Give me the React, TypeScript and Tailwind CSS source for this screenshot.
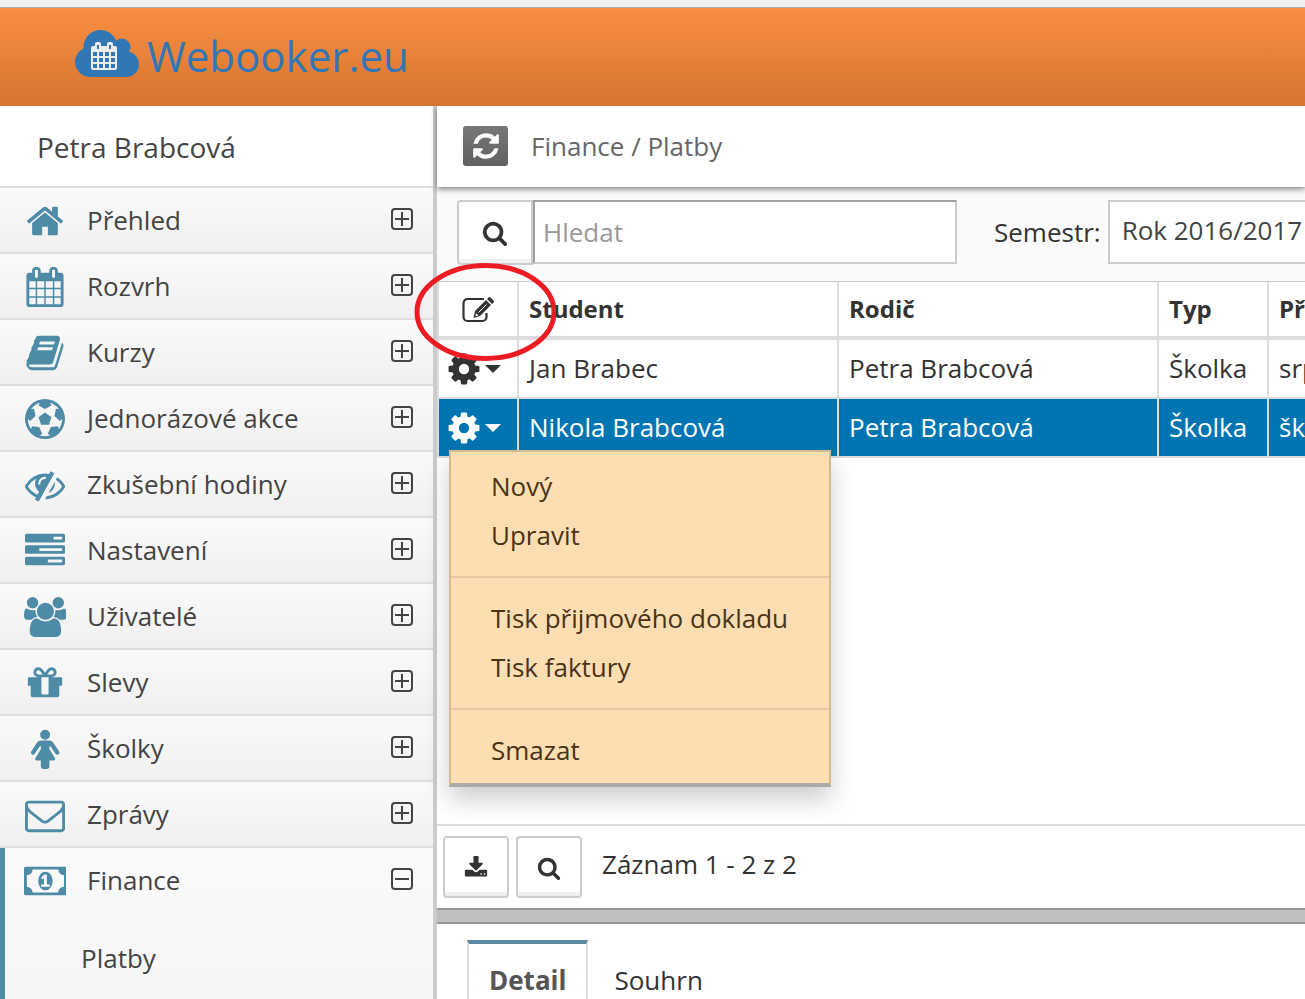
import React, { useState } from 'react';

interface IconProps {
  d: string;
  className?: string;
  width?: number;
}

const Icon: React.FC<IconProps> = ({ d, className, width = 1792 }) => (
  <svg viewBox={`0 0 ${width} 1792`} className={className} fill="currentColor" aria-hidden="true">
    <path d={d} />
  </svg>
);

const HOME = 'M1472 992v480q0 26-19 45t-45 19h-384v-384h-256v384h-384q-26 0-45-19t-19-45v-480q0-1 .5-3t.5-3l575-474 575 474q1 2 1 6zm223-69l-62 74q-8 9-21 11h-3q-13 0-21-7l-692-577-692 577q-12 8-24 7-13-2-21-11l-62-74q-8-10-7-23.5t11-21.5l719-599q32-26 76-26t76 26l244 204v-195q0-14 9-23t23-9h192q14 0 23 9t9 23v408l219 182q10 8 11 21.5t-7 23.5z';
const CALENDAR = 'M192 1664h288v-288h-288v288zm352 0h320v-288h-320v288zm-352-352h288v-320h-288v320zm352 0h320v-320h-320v320zm-352-384h288v-288h-288v288zm736 736h320v-288h-320v288zm-384-736h320v-288h-320v288zm768 736h288v-288h-288v288zm-384-352h320v-320h-320v320zm-352-864v-288q0-13-9.5-22.5t-22.5-9.5h-64q-13 0-22.5 9.5t-9.5 22.5v288q0 13 9.5 22.5t22.5 9.5h64q13 0 22.5-9.5t9.5-22.5zm736 864h288v-320h-288v320zm-384-384h320v-288h-320v288zm384 0h288v-288h-288v288zm32-480v-288q0-13-9.5-22.5t-22.5-9.5h-64q-13 0-22.5 9.5t-9.5 22.5v288q0 13 9.5 22.5t22.5 9.5h64q13 0 22.5-9.5t9.5-22.5zm384-64v1280q0 52-38 90t-90 38h-1408q-52 0-90-38t-38-90v-1280q0-52 38-90t90-38h128v-96q0-66 47-113t113-47h64q66 0 113 47t47 113v96h384v-96q0-66 47-113t113-47h64q66 0 113 47t47 113v96h128q52 0 90 38t38 90z';
const BOOK = 'M1703 478q40 57 18 129l-275 906q-19 64-76.5 107.5t-122.5 43.5h-923q-77 0-148.5-53.5t-99.5-131.5q-24-67-2-127 0-4 3-27t4-37q1-8-3-21.5t-3-19.5q2-11 8-21t16.5-23.5 16.5-23.5q23-38 45-91.5t30-91.5q3-10 .5-30t-.5-28q3-11 17-28t17-23q21-36 42-92t25-90q1-9-2.5-32t.5-28q4-13 22-30.5t22-22.5q19-26 42.5-84.5t27.5-96.5q1-8-3-25.5t-2-26.5q2-8 9-18t18-23 17-21q8-12 16.5-30.5t15-35 16-36 19.5-32 26.5-23.5 36-11.5 47.5 5.5l-1 3q38-9 51-9h761q74 0 114 56t18 130l-274 906q-36 119-71.5 153.5t-128.5 34.5h-869q-27 0-38 15-11 16-1 43 24 70 144 70h923q29 0 56-15.5t35-41.5l300-987q7-22 5-57 38 15 59 43zm-1064 2q-4 13 2 22.5t20 9.5h608q13 0 25.5-9.5t16.5-22.5l21-64q4-13-2-22.5t-20-9.5h-608q-13 0-25.5 9.5t-16.5 22.5zm-83 256q-4 13 2 22.5t20 9.5h608q13 0 25.5-9.5t16.5-22.5l21-64q4-13-2-22.5t-20-9.5h-608q-13 0-25.5 9.5t-16.5 22.5z';
const BALL = 'M609 816l287-208 287 208-109 336h-355zm287-816q182 0 348 71t286 191 191 286 71 348-71 348-191 286-286 191-348 71-348-71-286-191-191-286-71-348 71-348 191-286 286-191 348-71zm619 1350q149-203 149-454v-3l-102 89-240-224 63-323 134 12q-150-206-389-282l53 124-287 159-287-159 53-124q-239 76-389 282l135-12 62 323-240 224-102-89v3q0 251 149 454l30-132 326 40 139 298-116 69q117 39 240 39t240-39l-116-69 139-298 326-40z';
const EYE_OFF = 'M555 1335l78-141q-87-63-136-159t-49-203q0-121 61-225-229 117-381 353 167 258 427 375zm389-759q0-20-14-34t-34-14q-125 0-214.5 89.5t-89.5 214.5q0 20 14 34t34 14 34-14 14-34q0-86 61-147t147-61q20 0 34-14t14-34zm363-191q0 7-1 9-106 189-316 567t-315 566l-49 89q-10 16-28 16-12 0-134-70-16-10-16-28 0-12 44-87-143-65-263.5-173t-208.5-245q-20-31-20-69t20-69q153-235 380-371t496-136q89 0 180 17l54-97q10-16 28-16 5 0 18 6t31 15.5 33 18.5 31.5 18.5 19.5 11.5q16 10 16 27zm37 447q0 139-79 253.5t-209 164.5l280-502q8 45 8 84zm448 128q0 35-20 69-39 64-109 145-150 172-347.5 267t-419.5 95l74-132q212-18 392.5-137t301.5-307q-115-179-282-294l63-112q95 64 182.5 153t144.5 184q20 34 20 69z';
const TASKS = 'M1024 1408h640v-128h-640v128zm-384-512h1024v-128h-1024v128zm640-512h384v-128h-384v128zm512 832v256q0 26-19 45t-45 19h-1664q-26 0-45-19t-19-45v-256q0-26 19-45t45-19h1664q26 0 45 19t19 45zm0-512v256q0 26-19 45t-45 19h-1664q-26 0-45-19t-19-45v-256q0-26 19-45t45-19h1664q26 0 45 19t19 45zm0-512v256q0 26-19 45t-45 19h-1664q-26 0-45-19t-19-45v-256q0-26 19-45t45-19h1664q26 0 45 19t19 45z';
const USERS = 'M593 896q-162 5-265 128h-134q-82 0-138-40.5t-56-118.5q0-353 124-353 6 0 43.5 21t97.5 42.5 119 21.5q67 0 133-23-5 37-5 66 0 139 81 256zm1071 637q0 120-73 189.5t-194 69.5h-874q-121 0-194-69.5t-73-189.5q0-53 3.5-103.5t14-109 26.5-108.5 43-97.5 62-81 85.5-53.5 111.5-20q10 0 43 21.5t73 48 107 48 135 21.5 135-21.5 107-48 73-48 43-21.5q61 0 111.5 20t85.5 53.5 62 81 43 97.5 26.5 108.5 14 109 3.5 103.5zm-1024-1277q0 106-75 181t-181 75-181-75-75-181 75-181 181-75 181 75 75 181zm704 384q0 159-112.5 271.5t-271.5 112.5-271.5-112.5-112.5-271.5 112.5-271.5 271.5-112.5 271.5 112.5 112.5 271.5zm576 225q0 78-56 118.5t-138 40.5h-134q-103-123-265-128 81-117 81-256 0-29-5-66 66 23 133 23 59 0 119-21.5t97.5-42.5 43.5-21q124 0 124 353zm-128-609q0 106-75 181t-181 75-181-75-75-181 75-181 181-75 181 75 75 181z';
const GIFT = 'M1056 1356v-716h-320v716q0 25 18 38.5t46 13.5h192q28 0 46-13.5t18-38.5zm-456-844h195l-126-161q-26-31-69-31-40 0-68 28t-28 68 28 68 68 28zm688-96q0-40-28-68t-68-28q-43 0-69 31l-125 161h194q40 0 68-28t28-68zm376 256v320q0 14-9 23t-23 9h-96v416q0 40-28 68t-68 28h-1088q-40 0-68-28t-28-68v-416h-96q-14 0-23-9t-9-23v-320q0-14 9-23t23-9h440q-93 0-158.5-65.5t-65.5-158.5 65.5-158.5 158.5-65.5q107 0 168 77l128 165 128-165q61-77 168-77 93 0 158.5 65.5t65.5 158.5-65.5 158.5-158.5 65.5h440q14 0 23 9t9 23z';
const FEMALE = 'M1408 1056q0 40-28 68t-68 28q-51 0-80-43l-227-341h-45v132l247 411q9 15 9 33 0 26-19 45t-45 19h-192v272q0 46-33 79t-79 33h-160q-46 0-79-33t-33-79v-272h-192q-26 0-45-19t-19-45q0-18 9-33l247-411v-132h-45l-227 341q-29 43-80 43-40 0-68-28t-28-68q0-29 16-53l256-384q73-107 176-107h384q103 0 176 107l256 384q16 24 16 53zm-416-800q0 93-65.500 158.500t-158.500 65.500-158.500-65.500-65.500-158.500 65.500-158.500 158.500-65.500 158.500 65.500 65.500 158.500z';
const MAIL = 'M1664 1504v-768q-32 36-69 66-268 206-426 338-51 43-83 67t-86.5 48.5-102.5 24.5h-2q-48 0-102.5-24.5t-86.5-48.5-83-67q-158-132-426-338-37-30-69-66v768q0 13 9.5 22.5t22.5 9.5h1472q13 0 22.5-9.5t9.5-22.5zm0-1051v-24.5l-.5-13-3-12.5-5.5-9-9-7.5-14-2.5h-1472q-13 0-22.5 9.5t-9.5 22.5q0 168 147 284 193 152 401 317 6 5 35 29.5t46 37.5 44.5 31.5 50.5 27.5 43 9h2q20 0 43-9t50.5-27.5 44.5-31.5 46-37.5 35-29.5q208-165 401-317 54-43 100.5-115.5t46.5-131.5zm128-37v1088q0 66-47 113t-113 47h-1472q-66 0-113-47t-47-113v-1088q0-66 47-113t113-47h1472q66 0 113 47t47 113z';
const MONEY = 'M768 1152h384v-96h-128v-448h-114l-148 137 77 80q42-37 55-57h2v288h-128v96zm512-256q0 70-21 142t-59.5 134-101.5 101-138 39-138-39-101.5-101-59.5-134-21-142 21-142 59.5-134 101.5-101 138-39 138 39 101.5 101 59.5 134 21 142zm512 256v-512q-106 0-181-75t-75-181h-1152q0 106-75 181t-181 75v512q106 0 181 75t75 181h1152q0-106 75-181t181-75zm128-832v1152q0 26-19 45t-45 19h-1792q-26 0-45-19t-19-45v-1152q0-26 19-45t45-19h1792q26 0 45 19t19 45z';
const SEARCH = 'M1216 832q0-185-131.5-316.5t-316.5-131.5-316.5 131.5-131.5 316.5 131.5 316.5 316.5 131.5 316.5-131.5 131.5-316.5zm512 832q0 52-38 90t-90 38q-54 0-90-38l-343-342q-179 124-399 124-143 0-273.5-55.5t-225-150-150-225-55.5-273.5 55.5-273.5 150-225 225-150 273.5-55.5 273.5 55.5 225 150 150 225 55.5 273.5q0 220-124 399l343 343q37 37 37 90z';
const REFRESH = 'M1639 1056q0 5-1 7-64 268-268 434.5t-478 166.5q-146 0-282.5-55t-243.5-157l-129 129q-19 19-45 19t-45-19-19-45v-448q0-26 19-45t45-19h448q26 0 45 19t19 45-19 45l-137 137q71 66 161 102t187 36q134 0 250-65t186-179q11-17 53-117 8-23 30-23h192q13 0 22.5 9.5t9.5 22.5zm25-800v448q0 26-19 45t-45 19h-448q-26 0-45-19t-19-45 19-45l138-138q-148-137-349-137-134 0-250 65t-186 179q-11 17-53 117-8 23-30 23h-199q-13 0-22.5-9.5t-9.5-22.5v-7q65-268 270-434.5t480-166.5q146 0 284 55.5t245 156.5l130-129q19-19 45-19t45 19 19 45z';
const COG = 'M1152 896q0-106-75-181t-181-75-181 75-75 181 75 181 181 75 181-75 75-181zm512-109v222q0 12-8 23t-20 13l-185 28q-19 54-39 91 35 50 107 138 10 12 10 25t-9 23q-27 37-99 108t-94 71q-12 0-26-9l-138-108q-44 23-91 38-16 136-29 186-7 28-36 28h-222q-14 0-24.5-8.5t-11.5-21.5l-28-184q-49-16-90-37l-141 107q-10 9-25 9-14 0-25-11-126-114-165-168-7-10-7-23 0-12 8-23 15-21 51-66.5t54-70.5q-27-50-41-99l-183-27q-13-2-21-12.5t-8-23.5v-222q0-12 8-23t19-13l186-28q14-46 39-92-40-57-107-138-10-12-10-24 0-10 9-23 26-36 98.5-107.5t94.5-71.5q13 0 26 10l138 107q44-23 91-38 16-136 29-186 7-28 36-28h222q14 0 24.5 8.5t11.5 21.5l28 184q49 16 90 37l142-107q9-9 24-9 13 0 25 10 129 119 165 170 7 8 7 22 0 12-8 23-15 21-51 66.5t-54 70.5q26 50 41 98l183 28q13 2 21 12.5t8 23.5z';
const DOWNLOAD = 'M1344 1344q0-26-19-45t-45-19-45 19-19 45 19 45 45 19 45-19 19-45zm256 0q0-26-19-45t-45-19-45 19-19 45 19 45 45 19 45-19 19-45zm128-224v320q0 40-28 68t-68 28h-1472q-40 0-68-28t-28-68v-320q0-40 28-68t68-28h465l135 136q58 56 136 56t136-56l136-136h464q40 0 68 28t28 68zm-325-569q17 41-14 70l-448 448q-18 19-45 19t-45-19l-448-448q-31-29-14-70 17-39 59-39h256v-448q0-26 19-45t45-19h256q26 0 45 19t19 45v448h256q42 0 59 39z';
const CLOUD = 'M1984 1152q0 159-112.5 271.5t-271.5 112.5h-1088q-185 0-316.5-131.5t-131.5-316.5q0-132 71-241.5t187-163.5q-2-28-2-43 0-212 150-362t362-150q158 0 286.5 88t187.5 230q70-62 166-62 106 0 181 75t75 181q0 75-41 138 129 30 213 134.5t84 239.5z';

const MENU = [
  { label: 'Přehled', icon: HOME },
  { label: 'Rozvrh', icon: CALENDAR },
  { label: 'Kurzy', icon: BOOK },
  { label: 'Jednorázové akce', icon: BALL },
  { label: 'Zkušební hodiny', icon: EYE_OFF },
  { label: 'Nastavení', icon: TASKS },
  { label: 'Uživatelé', icon: USERS, width: 1920 },
  { label: 'Slevy', icon: GIFT },
  { label: 'Školky', icon: FEMALE, width: 1536 },
  { label: 'Zprávy', icon: MAIL },
];

const ROWS = [
  { student: 'Jan Brabec', parent: 'Petra Brabcová', type: 'Školka', note: 'srpen 2016' },
  { student: 'Nikola Brabcová', parent: 'Petra Brabcová', type: 'Školka', note: 'školné' },
];

const ACTIONS = [['Nový', 'Upravit'], ['Tisk přijmového dokladu', 'Tisk faktury'], ['Smazat']];

const Expander = ({ open = false }: { open?: boolean }) => (
  <svg viewBox="0 0 22 22" className="mr-5 mb-0.5 size-[22px] shrink-0" fill="none" stroke="#444" strokeWidth="2" aria-hidden="true">
    <rect x="1" y="1" width="20" height="20" rx="3" />
    <path d={open ? 'M4 11h14' : 'M4 11h14M11 4v14'} />
  </svg>
);

const EditIcon = () => (
  <svg viewBox="0 0 32 26" className="mt-0.5 h-[26px] w-8" aria-hidden="true">
    <path d="M22 2H5.500a4 4 0 0 0-4 4v14a4 4 0 0 0 4 4h15a4 4 0 0 0 4-4v-4" fill="none" stroke="#333" strokeWidth="2.200" />
    <path d="M11.500 21l1.500-7L24 3l5 5-11 11z" fill="#333" />
    <path d="M25 2l1.500-1.500q1-.8 2 0l3 3q.8 1 0 2L30 7z" fill="#333" />
    <path d="M16.500 15.500l8-8" stroke="#fff" strokeWidth="1" />
    <path d="M13.300 19.200l.9-3 2.200 2.200z" fill="#fff" />
  </svg>
);

const Sidebar = () => (
  <aside className="w-[437px] shrink-0 border-r-4 border-[#ccc] bg-[#f7f7f7] text-[26px] leading-9 text-[#444]">
    <div className="flex h-[82px] items-center border-b-2 border-[#dedede] bg-white pt-0.5 pl-[37px] text-[28px]">Petra Brabcová</div>
    <nav>
      {MENU.map((item) => (
        <a key={item.label} href="#" className="flex h-[66px] items-center border-b-2 border-[#dedede] bg-linear-to-b from-[#fafafa] to-[#f0f0f0]">
          <span className="ml-[23px] flex w-11 shrink-0 justify-center pt-0.5 text-[#4e8ba6]">
            <Icon d={item.icon} width={item.width} className="h-10" />
          </span>
          <span className="ml-5 flex-1">{item.label}</span>
          <Expander />
        </a>
      ))}
      <div className="border-l-[5px] border-[#4e8ba6] bg-linear-to-b from-[#fafafa] to-[#f5f5f5] pb-12">
        <a href="#" className="flex h-16 items-center">
          <span className="ml-[18px] flex w-11 shrink-0 justify-center pt-0.5 text-[#4e8ba6]">
            <Icon d={MONEY} width={1920} className="h-10" />
          </span>
          <span className="ml-5 flex-1">Finance</span>
          <Expander open />
        </a>
        <a href="#" className="flex h-[92px] items-center pl-[76px]">Platby</a>
      </div>
    </nav>
  </aside>
);

const RowMenu = () => (
  <div role="menu" className="w-[382px] border-2 border-b-4 border-[#d6b98f] border-b-[#aaa] bg-[#fddeb3] text-[#4a3417] shadow-[0_12px_24px_rgba(0,0,0,0.2)]">
    {ACTIONS.map((group) => (
      <div key={group[0]} className="border-t-2 border-[#eac7a0] pt-[15px] pb-[17px] pl-10 first:border-t-0 first:pt-[9px] last:pb-[9px]">
        {group.map((action) => (
          <button key={action} type="button" role="menuitem" className="block h-[49px] w-full text-left">
            {action}
          </button>
        ))}
      </div>
    ))}
  </div>
);

const RowButton = () => (
  <button type="button" aria-label="Akce" className="flex items-center gap-[3px] pl-[7px]">
    <Icon d={COG} className="size-9" />
    <svg viewBox="0 0 16 8" className="h-2 w-4" fill="currentColor" aria-hidden="true">
      <path d="M0 0h16l-8 8z" />
    </svg>
  </button>
);

const HEAD = 'border-r-2 border-b-4 border-[#dcdcdc] px-[10px] text-left font-bold';
const CELL = 'border-r-2 border-b-2 border-[#dcdcdc] px-[10px] pb-0.5';
const BOX_BUTTON = 'flex shrink-0 items-center justify-center rounded-[4px] border-2 border-[#ccc] bg-white shadow-[inset_0_-4px_0_#f0f0f0] text-[#333]';

export default function App() {
  const [query, setQuery] = useState('');

  return (
    <div className="flex h-screen flex-col overflow-hidden bg-white font-['Open_Sans',sans-serif] text-[26px] leading-9 text-[#333]">
      <div className="h-2 shrink-0 border-b border-[#a9abb5] bg-[#f0f0f0]" />
      <header className="relative z-10 flex h-[98px] shrink-0 items-center bg-linear-to-b from-[#fa8e42] to-[#d67430] pb-0.5">
        <a href="#" className="flex items-center pl-[75px] text-[#3277b5]">
          <span className="relative">
            <svg viewBox="64 128 1920 1408" className="mb-1.5 h-[47px] w-16" fill="currentColor" aria-hidden="true">
              <path d={CLOUD} />
            </svg>
            <svg viewBox="0 0 26 28" className="absolute top-3 left-4 h-7 w-[26px]" aria-hidden="true">
              <path d="M2 4h22q2 0 2 2v20q0 2-2 2H2q-2 0-2-2V6q0-2 2-2z" fill="#ebebeb" />
              <rect x="4" y="0" width="6" height="9" rx="2" fill="#ebebeb" />
              <rect x="16" y="0" width="6" height="9" rx="2" fill="#ebebeb" />
              <path d="M6 3h2v4H6zM18 3h2v4h-2zM2 10h4v4H2zM8 10h4v4H8zM14 10h4v4h-4zM20 10h4v4h-4zM2 16h4v4H2zM8 16h4v4H8zM14 16h4v4h-4zM20 16h4v4h-4zM2 22h4v4H2zM8 22h4v4H8zM14 22h4v4h-4zM20 22h4v4h-4z" fill="#3277b5" />
            </svg>
          </span>
          <span className="ml-2 text-[42px]">Webooker.eu</span>
        </a>
      </header>

      <div className="flex min-h-0 flex-1">
        <Sidebar />

        <main className="relative flex min-w-0 flex-1 flex-col">
          <div className="relative flex h-[81px] shrink-0 items-center bg-white pb-0.5 pl-[26px] text-[#666] shadow-[0_2px_6px_rgba(0,0,0,0.5)]">
            <button type="button" aria-label="Obnovit" className="flex h-10 w-[45px] items-center justify-center rounded-[3px] bg-linear-to-b from-[#777] to-[#616161] text-white">
              <Icon d={REFRESH} className="size-[30px]" />
            </button>
            <span className="ml-[23px]">Finance / Platby</span>
          </div>

          <div className="flex h-[94px] shrink-0 bg-[#fafafa] pt-[13px] pl-5">
            <button type="button" aria-label="Vyhledat" className={`${BOX_BUTTON} h-[65px] w-[76px] rounded-r-none`}>
              <Icon d={SEARCH} className="size-[26px]" />
            </button>
            <input
              type="text"
              aria-label="Hledat"
              placeholder="Hledat"
              value={query}
              onChange={(e) => setQuery(e.target.value)}
              className="h-16 w-[424px] shrink-0 border-2 border-[#ccc] border-t-[#a0a0a0] border-l-[#a0a0a0] bg-white pl-2 outline-none placeholder:text-[#999]"
            />
            <label htmlFor="term" className="ml-[37px] flex h-16 items-center">Semestr:</label>
            <select id="term" className="ml-[7px] h-16 w-[300px] shrink-0 appearance-none border-2 border-[#ccc] bg-white pb-1 pl-3 text-[#444]">
              <option>Rok 2016/2017</option>
            </select>
          </div>

          <div className="relative min-h-0 flex-1">
            <div className="h-full overflow-hidden">
              <table className="w-[1200px] table-fixed border-separate border-spacing-0 border-t border-l-2 border-[#ccc] border-l-[#dcdcdc]">
                <colgroup>
                  <col className="w-20" />
                  <col className="w-80" />
                  <col className="w-80" />
                  <col className="w-[110px]" />
                  <col />
                </colgroup>
                <thead>
                  <tr className="h-[58px] text-[24px]">
                    <th scope="col" aria-label="Akce" className={HEAD}>
                      <div className="flex justify-center">
                        <EditIcon />
                      </div>
                    </th>
                    <th scope="col" className={HEAD}>Student</th>
                    <th scope="col" className={HEAD}>Rodič</th>
                    <th scope="col" className={HEAD}>Typ</th>
                    <th scope="col" className={HEAD}>Předmět</th>
                  </tr>
                </thead>
                <tbody>
                  {ROWS.map((row, i) => (
                    <tr key={row.student} className={i === 1 ? 'h-[59px] bg-[#0075b2] text-white' : 'h-[59px]'}>
                      <td className="border-r-2 border-b-2 border-[#dcdcdc]">
                        <RowButton />
                      </td>
                      <td className={CELL}>{row.student}</td>
                      <td className={CELL}>{row.parent}</td>
                      <td className={CELL}>{row.type}</td>
                      <td className={CELL}>{row.note}</td>
                    </tr>
                  ))}
                </tbody>
              </table>
            </div>
            <div className="absolute top-[169px] left-3 z-10">
              <RowMenu />
            </div>
            {/* hand-drawn marker around the edit column */}
            <svg viewBox="0 0 142 98" className="absolute -top-[18px] -left-[23px] z-20 h-[98px] w-[142px]" fill="none" aria-hidden="true">
              <ellipse cx="71.500" cy="49" rx="68.500" ry="46.500" stroke="#ed1c24" strokeWidth="5" />
            </svg>
          </div>

          <div className="flex h-[84px] shrink-0 items-start gap-[7px] border-t-2 border-[#dcdcdc] pt-[10px] pl-[6px]">
            <button type="button" aria-label="Export" className={`${BOX_BUTTON} h-[62px] w-[66px] pt-0.5`}>
              <Icon d={DOWNLOAD} className="size-6" />
            </button>
            <button type="button" aria-label="Vyhledat záznam" className={`${BOX_BUTTON} h-[62px] w-[66px] pt-0.5`}>
              <Icon d={SEARCH} className="size-6" />
            </button>
            <span className="ml-[13px] pt-[10px]">Záznam 1 - 2 z 2</span>
          </div>
          <div className="h-4 shrink-0 border-y-2 border-[#999] bg-[#bfbfbf]" />
          <div role="tablist" className="flex h-[75px] shrink-0 items-end pl-[30px]">
            <button type="button" role="tab" aria-selected="true" className="h-[59px] border-x-2 border-t-4 border-[#dcdcdc] border-t-[#5a8ba3] px-5 pt-4 font-bold text-[#555]">
              Detail
            </button>
            <button type="button" role="tab" aria-selected="false" className="h-[59px] px-[26px] pt-5">
              Souhrn
            </button>
          </div>
        </main>
      </div>
    </div>
  );
}
